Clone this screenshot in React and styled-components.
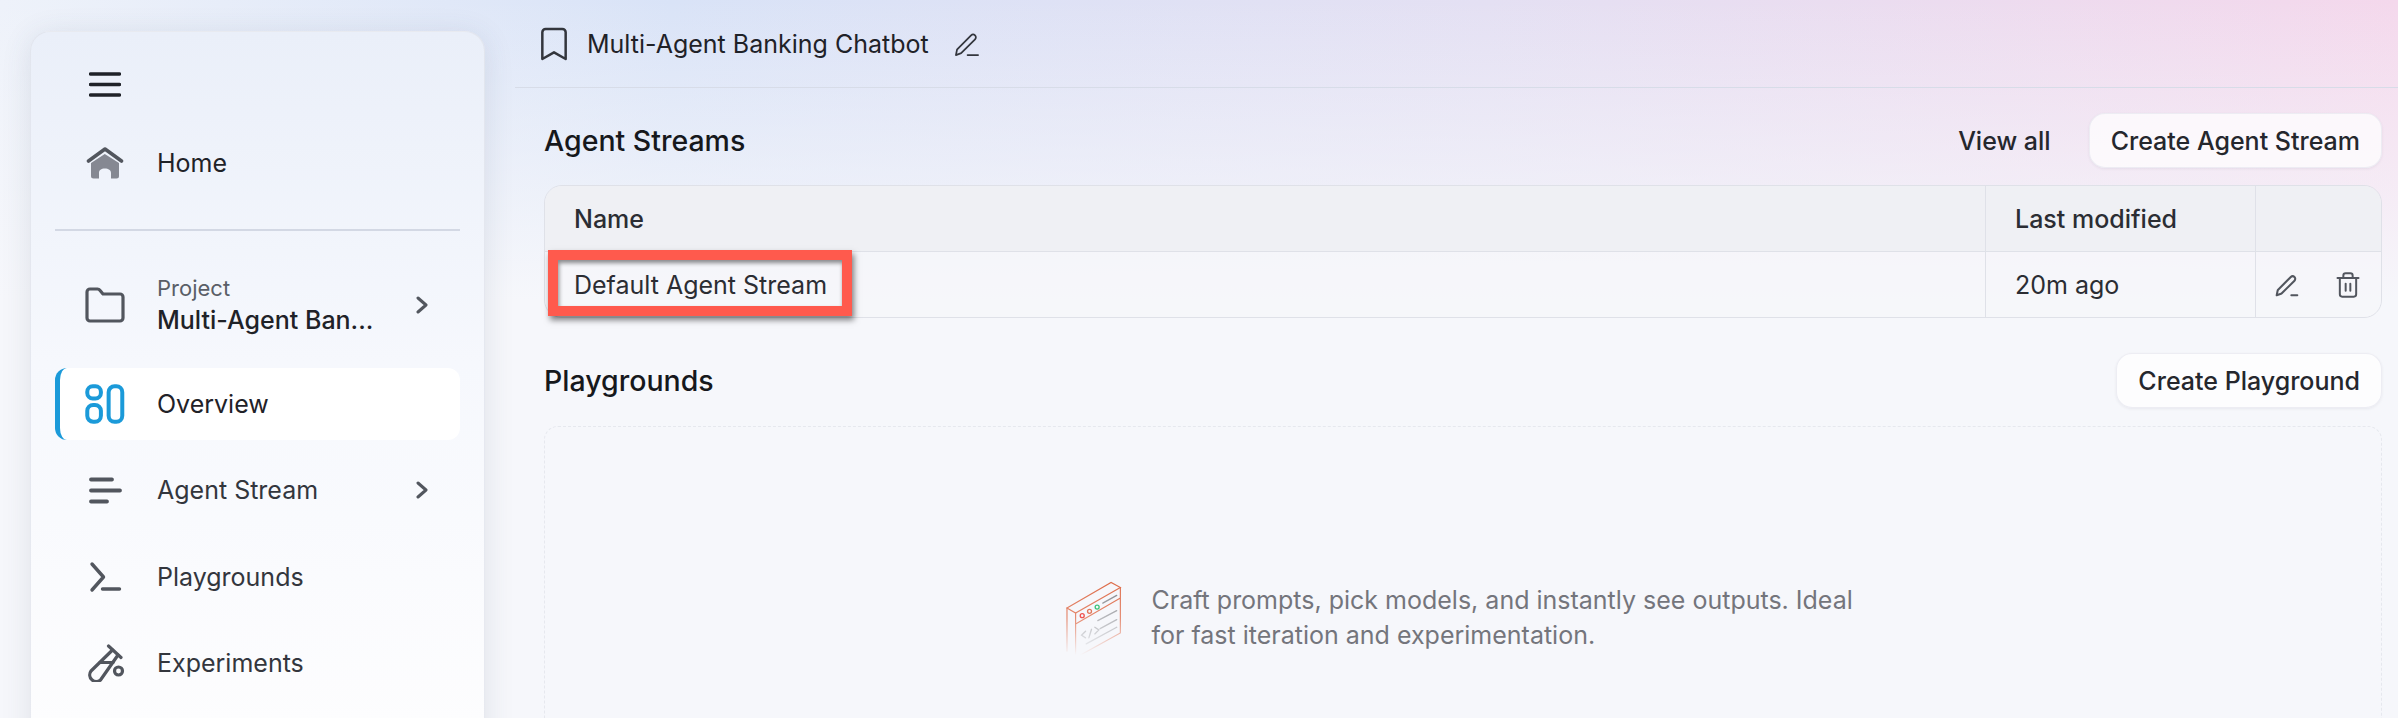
import React from 'react';
import styled, { createGlobalStyle } from 'styled-components';
import { Bookmark, Trash2 } from 'lucide-react';

const GlobalStyle = createGlobalStyle`
  html, body {
    margin: 0;
    padding: 0;
    background: #f6f7fb;
  }
  * {
    box-sizing: border-box;
  }
`;

const Page = styled.div`
  display: flex;
  width: 2398px;
  height: 718px;
  overflow: hidden;
  font-family: 'Inter', 'Liberation Sans', sans-serif;
  font-size: 25px;
  color: #25272d;
  background:
    linear-gradient(to bottom, rgba(246, 247, 251, 0) 0, #f6f7fb 300px),
    linear-gradient(90deg, #eef2fa 0%, #d9e3f7 28%, #e4e0f3 62%, #f4d8ec 100%);
`;

const Sidebar = styled.aside`
  flex: 0 0 455px;
  height: 780px;
  margin: 31px 30px 0;
  padding: 16px 24px 0;
  display: flex;
  flex-direction: column;
  border-radius: 20px;
  border: 1px solid rgba(222, 225, 234, 0.7);
  background: linear-gradient(to bottom, #eaeff9 0, #f6f8fd 330px, #fdfdfe 700px);
  box-shadow: 0 4px 30px rgba(60, 70, 100, 0.12);
`;

const NavRow = styled.div`
  display: flex;
  align-items: center;
  flex: 0 0 72px;
  padding: 0 32px 0 ${({ $active }) => ($active ? '25px' : '30px')};
  margin-top: ${({ $gap }) => $gap || 0}px;
  gap: 32px;
  border-radius: 12px;
  color: ${({ $dark }) => ($dark ? '#1f2228' : '#33363d')};
  ${({ $active }) =>
    $active &&
    `
    background: rgba(255, 255, 255, 0.95);
    border-left: 5px solid #1b9ad9;
  `}
`;

const IconSlot = styled.span`
  flex: 0 0 40px;
  width: 40px;
  display: flex;
  justify-content: center;
  align-items: center;
  color: #52565e;
`;

const NavLabel = styled.span`
  flex: 1;
  white-space: nowrap;
`;

const Divider = styled.hr`
  width: 100%;
  height: 2px;
  margin: 30px 0 0;
  border: none;
  background: #d3d8e4;
`;

const ProjectText = styled.div`
  flex: 1;
  display: flex;
  flex-direction: column;
  small {
    font-size: 22px;
    line-height: 30px;
    color: #5a5e67;
  }
  strong {
    font-weight: 500;
    line-height: 34px;
    color: #1f2228;
  }
`;

const Main = styled.main`
  flex: 1;
  min-width: 0;
  display: flex;
  flex-direction: column;
`;

const TopBar = styled.header`
  flex: 0 0 88px;
  display: flex;
  align-items: center;
  padding-left: 19px;
  gap: 13px;
  border-bottom: 1.5px solid #d7dce8;
  color: #1f2228;
  svg {
    color: #33363d;
  }
`;

const TopTitle = styled.span`
  white-space: nowrap;
  margin-right: 11px;
`;

const Content = styled.div`
  padding: 25px 16px 0 29px;
  display: flex;
  flex-direction: column;
`;

const SectionHead = styled.div`
  display: flex;
  align-items: center;
  height: 55px;
  margin-top: ${({ $gap }) => $gap || 0}px;
  gap: 38px;
`;

const SectionTitle = styled.h2`
  flex: 1;
  margin: 0;
  font-size: 28.5px;
  font-weight: 500;
  color: #16181c;
`;

const LinkText = styled.span`
  font-weight: 500;
  color: #25272d;
`;

const Button = styled.button`
  height: 55px;
  padding: 0 21px;
  border: 1px solid rgba(232, 232, 240, 0.8);
  border-radius: 16px;
  background: rgba(255, 255, 255, 0.72);
  box-shadow: 0 1px 3px rgba(40, 40, 70, 0.07);
  font: 500 25px 'Inter', 'Liberation Sans', sans-serif;
  color: #25272d;
`;

const Table = styled.div`
  margin-top: 17px;
  border: 1.5px solid #dfe1e8;
  border-radius: 18px;
`;

const TableRow = styled.div`
  display: grid;
  grid-template-columns: 1fr 270px 126px;
  height: ${({ $head }) => ($head ? 66 : 65)}px;
  background: ${({ $head }) => ($head ? '#eff0f4' : 'rgba(246, 246, 250, 0.6)')};
  border-bottom: ${({ $head }) => ($head ? '1.5px solid #dfe1e8' : 'none')};
  border-radius: ${({ $head }) => ($head ? '17px 17px 0 0' : '0 0 17px 17px')};
`;

const Cell = styled.div`
  position: relative;
  display: flex;
  align-items: center;
  padding-left: 29px;
  color: #2b2d33;
  font-weight: ${({ $head }) => ($head ? 500 : 400)};
  & + & {
    border-left: 1.5px solid #dfe1e8;
  }
  svg {
    color: #52565e;
  }
`;

const ActionCell = styled(Cell)`
  padding-left: 18px;
  gap: 34px;
`;

/* red annotation box drawn over the first row */
const Highlight = styled.div`
  position: absolute;
  left: 3px;
  top: -2px;
  width: 304px;
  height: 66px;
  border: 10px solid #ff5a4d;
  box-shadow:
    2px 4px 6px rgba(0, 0, 0, 0.5),
    inset 1px 3px 4px rgba(0, 0, 0, 0.45);
`;

const EmptyPanel = styled.div`
  margin-top: 18px;
  height: 384px;
  display: flex;
  align-items: center;
  justify-content: center;
  gap: 26px;
  border: 1.5px dashed #e6e8ee;
  border-radius: 14px;
`;

const EmptyText = styled.p`
  width: 712px;
  margin: 0;
  line-height: 35px;
  color: #74757c;
`;

const MenuIcon = () => (
  <svg width="32" height="25" viewBox="0 0 32 25" fill="none" stroke="#1f2228" strokeWidth="3.4" strokeLinecap="round">
    <path d="M1.5 2h29M1.5 12.5h29M1.5 23h29" />
  </svg>
);

const HomeIcon = () => (
  <svg width="38" height="34" viewBox="0 0 38 34" fill="none">
    <path d="M5 17 18.8 8 33 17v13a2.5 2.5 0 0 1-2.5 2.5H25V27c0-3-2.6-4.6-6.2-4.6S13 24 13 27v5.5H7.5A2.5 2.5 0 0 1 5 30z" fill="#858892" />
    <path d="M2.5 15 19 3l16.5 12" stroke="#52565e" strokeWidth="3.6" strokeLinecap="round" strokeLinejoin="round" />
  </svg>
);

const FolderIcon = () => (
  <svg width="40" height="36" viewBox="0 0 40 36" fill="none" stroke="#52565e" strokeWidth="3.2" strokeLinejoin="round">
    <path d="M2 5a3 3 0 0 1 3-3h7.500a3 3 0 0 1 2.400 1.200L18 7h17a3 3 0 0 1 3 3v21a3 3 0 0 1-3 3H5a3 3 0 0 1-3-3z" />
  </svg>
);

const ChevronIcon = () => (
  <svg width="12" height="18" viewBox="0 0 12 18" fill="none" stroke="#52565e" strokeWidth="3" strokeLinecap="round" strokeLinejoin="round">
    <path d="m2 2 8 7-8 7" />
  </svg>
);

const OverviewIcon = () => (
  <svg width="44" height="44" viewBox="0 0 44 44" fill="none" stroke="#1b9ad9" strokeWidth="4.4">
    <rect x="2.5" y="2.5" width="15" height="13.5" rx="6" />
    <rect x="2.5" y="23" width="15" height="18.5" rx="6.5" />
    <rect x="26" y="2.5" width="15" height="39" rx="6.5" />
  </svg>
);

const StreamIcon = () => (
  <svg width="33" height="27" viewBox="0 0 33 27" fill="none" stroke="#52565e" strokeWidth="3.8" strokeLinecap="round">
    <path d="M2 2.5h21M2 13.500h29M2 24.500h16" />
  </svg>
);

const TerminalIcon = () => (
  <svg width="33" height="32" viewBox="0 0 33 32" fill="none" stroke="#52565e" strokeWidth="3.4" strokeLinecap="round" strokeLinejoin="round">
    <path d="m3 3 11.500 13L3 29M13.500 28h17" />
  </svg>
);

const FlaskIcon = () => (
  <svg width="40" height="38" viewBox="0 0 40 38" fill="none" stroke="#52565e" strokeWidth="3.2" strokeLinecap="round" strokeLinejoin="round">
    <path d="M23.500 2 36 13.500" />
    <path d="M27.500 6 6 27a6.600 6.600 0 0 0 9.500 9L33 11" />
    <path d="M15 18.500h13" />
    <circle cx="33.500" cy="27" r="4" />
  </svg>
);

const PencilDash = ({ size, dash, stroke = '#33363d', weight = 1.5 }) => (
  <svg width={size} height={size} viewBox="0 0 24 24" fill="none" stroke={stroke} strokeWidth={weight} strokeLinecap="round" strokeLinejoin="round">
    <path d="M2.500 21.500 3.400 17a1.500 1.500 0 0 1 .4-.7L15.500 4.600a2.400 2.400 0 0 1 3.400 3.400L7.200 19.700a1.500 1.500 0 0 1-.7.4z" />
    <path d={`M${21.5 - dash} 21.500h${dash}`} />
  </svg>
);

/* isometric browser window that fades out at the bottom */
const WindowArt = () => (
  <svg width="63" height="80" viewBox="70 30 190 240" fill="none" strokeWidth="3.5" strokeLinecap="round">
    <defs>
      <linearGradient id="frameFade" gradientUnits="userSpaceOnUse" x1="0" y1="40" x2="0" y2="262">
        <stop offset="0" stopColor="#dd6c49" />
        <stop offset="0.5" stopColor="#e58a70" />
        <stop offset="1" stopColor="#f6f7fb" />
      </linearGradient>
      <linearGradient id="lineFade" gradientUnits="userSpaceOnUse" x1="0" y1="80" x2="0" y2="250">
        <stop offset="0" stopColor="#8f9094" />
        <stop offset="1" stopColor="#f0f1f5" />
      </linearGradient>
    </defs>
    <g stroke="url(#frameFade)">
      <path d="M82 120 215 43l28 15-135 77z" />
      <path d="M82 120v130M108 135v135M243 58v137l-135 75M108 168 243 90" />
    </g>
    <circle cx="128" cy="143" r="6" stroke="#ef5350" strokeWidth="4" />
    <circle cx="150" cy="130" r="6" stroke="#e2785c" strokeWidth="4" />
    <circle cx="173" cy="117" r="6" stroke="#3fc47a" strokeWidth="4" />
    <g stroke="url(#lineFade)" strokeWidth="4">
      <path d="m190 105 42-23M175 158l57-30M182 182l50-27M140 228l92-50" />
      <path d="m138 190-12 12 12 8M148 210l8-26M166 178l12 8-12 12" />
    </g>
  </svg>
);

const App = () => (
  <Page>
    <GlobalStyle />
    <Sidebar>
      <NavRow>
        <IconSlot>
          <MenuIcon />
        </IconSlot>
      </NavRow>
      <NavRow $gap={7} $dark>
        <IconSlot>
          <HomeIcon />
        </IconSlot>
        <NavLabel>Home</NavLabel>
      </NavRow>
      <Divider />
      <NavRow $gap={38}>
        <IconSlot>
          <FolderIcon />
        </IconSlot>
        <ProjectText>
          <small>Project</small>
          <strong>Multi-Agent Ban...</strong>
        </ProjectText>
        <ChevronIcon />
      </NavRow>
      <NavRow $gap={27} $active $dark>
        <IconSlot>
          <OverviewIcon />
        </IconSlot>
        <NavLabel>Overview</NavLabel>
      </NavRow>
      <NavRow $gap={14}>
        <IconSlot>
          <StreamIcon />
        </IconSlot>
        <NavLabel>Agent Stream</NavLabel>
        <ChevronIcon />
      </NavRow>
      <NavRow $gap={15}>
        <IconSlot>
          <TerminalIcon />
        </IconSlot>
        <NavLabel>Playgrounds</NavLabel>
      </NavRow>
      <NavRow $gap={14}>
        <IconSlot>
          <FlaskIcon />
        </IconSlot>
        <NavLabel>Experiments</NavLabel>
      </NavRow>
    </Sidebar>
    <Main>
      <TopBar>
        <Bookmark size={40} strokeWidth={1.5} />
        <TopTitle>Multi-Agent Banking Chatbot</TopTitle>
        <PencilDash size={28} dash={9} weight={1.5} />
      </TopBar>
      <Content>
        <SectionHead>
          <SectionTitle>Agent Streams</SectionTitle>
          <LinkText>View all</LinkText>
          <Button>Create Agent Stream</Button>
        </SectionHead>
        <Table>
          <TableRow $head>
            <Cell $head>Name</Cell>
            <Cell $head>Last modified</Cell>
            <Cell />
          </TableRow>
          <TableRow>
            <Cell>
              Default Agent Stream
              <Highlight />
            </Cell>
            <Cell>20m ago</Cell>
            <ActionCell>
              <PencilDash size={26} dash={5.5} stroke="#52565e" weight={1.9} />
              <Trash2 size={28} strokeWidth={1.7} />
            </ActionCell>
          </TableRow>
        </Table>
        <SectionHead $gap={35}>
          <SectionTitle>Playgrounds</SectionTitle>
          <Button>Create Playground</Button>
        </SectionHead>
        <EmptyPanel>
          <WindowArt />
          <EmptyText>
            Craft prompts, pick models, and instantly see outputs. Ideal for fast iteration and experimentation.
          </EmptyText>
        </EmptyPanel>
      </Content>
    </Main>
  </Page>
);

export default App;
